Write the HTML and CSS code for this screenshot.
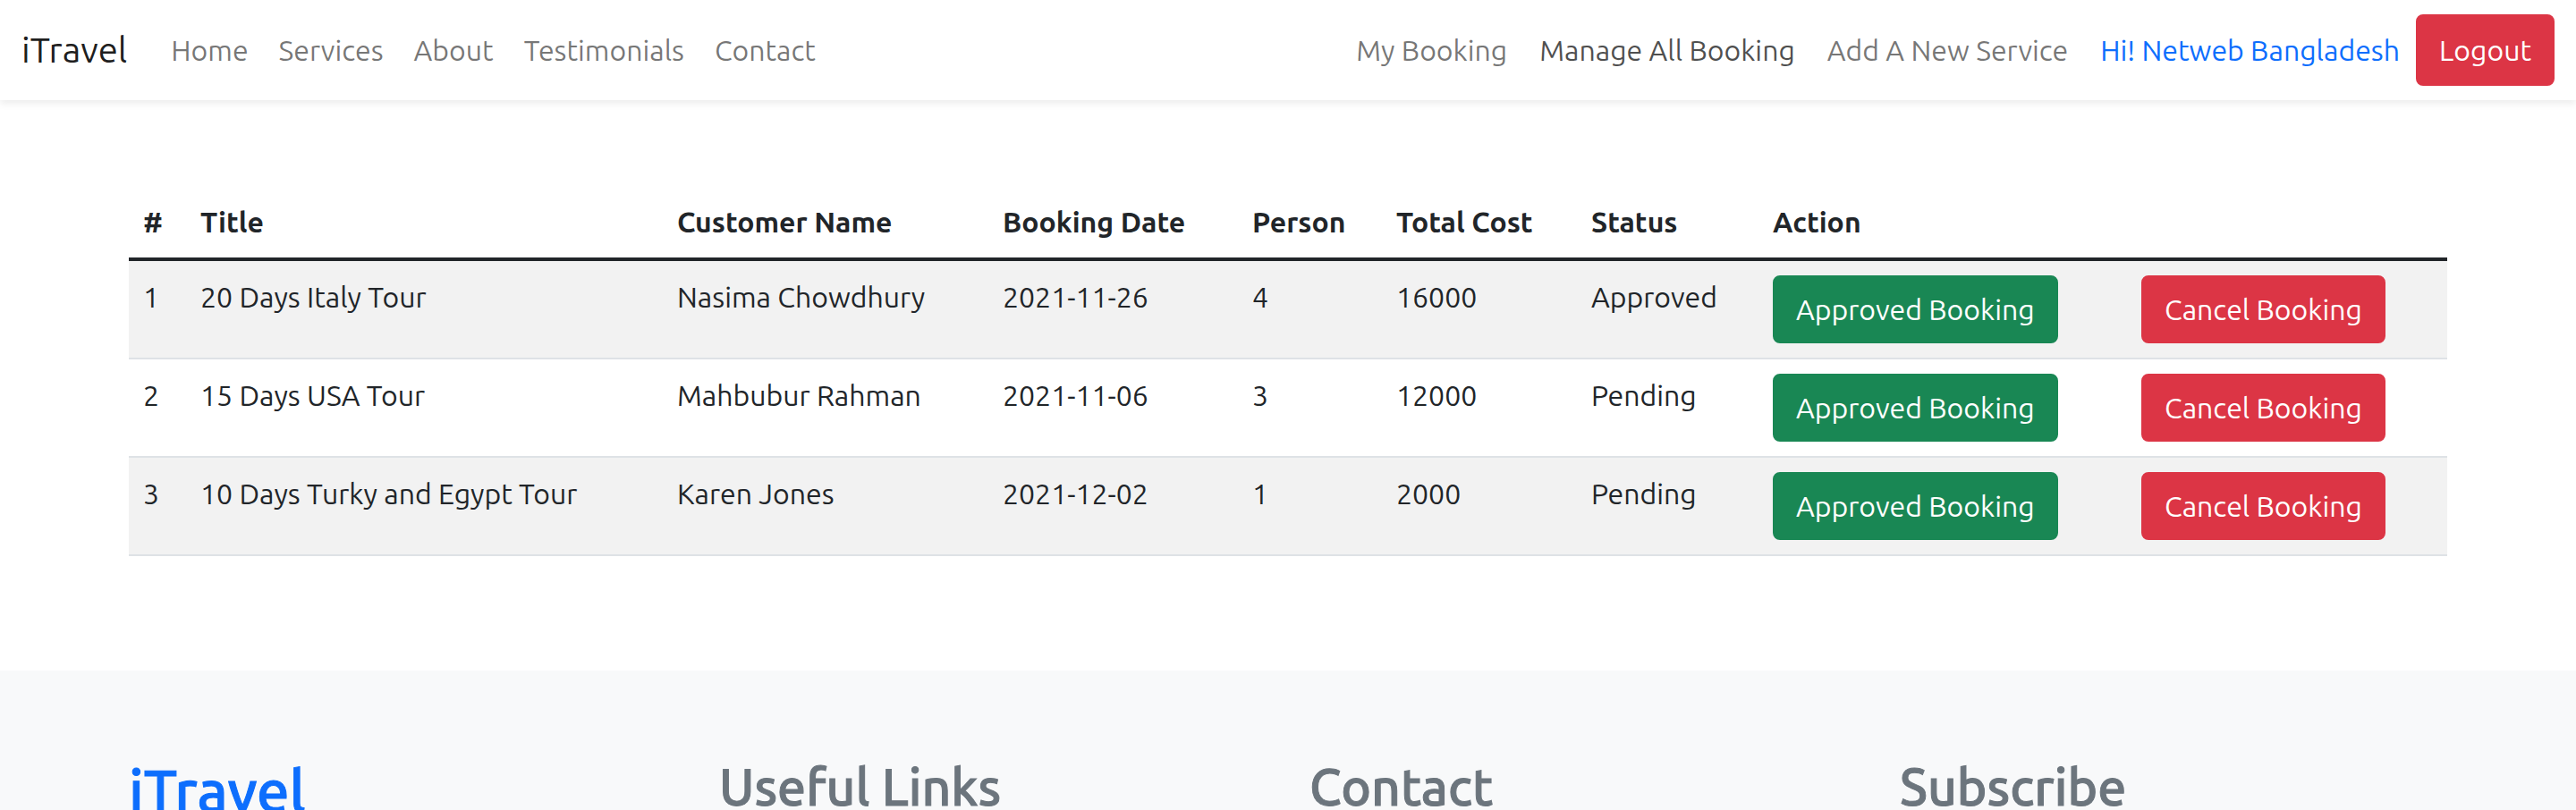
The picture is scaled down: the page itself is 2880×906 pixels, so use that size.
FILE: index.html
```html
<!DOCTYPE html>
<html lang="en">
<head>
<meta charset="utf-8">
<title>iTravel</title>
<link rel="stylesheet" href="styles.css">
</head>
<body>
<header class="navbar">
  <a class="brand" href="#">iTravel</a>
  <nav class="nav" aria-label="Main">
    <a class="nav-link" href="#">Home</a>
    <a class="nav-link" href="#">Services</a>
    <a class="nav-link" href="#">About</a>
    <a class="nav-link" href="#">Testimonials</a>
    <a class="nav-link" href="#">Contact</a>
  </nav>
  <nav class="nav nav-end" aria-label="Account">
    <a class="nav-link" href="#">My Booking</a>
    <a class="nav-link active" href="#">Manage All Booking</a>
    <a class="nav-link" href="#">Add A New Service</a>
    <a class="nav-link user" href="#">Hi! Netweb Bangladesh</a>
    <button class="btn btn-danger logout" type="button">Logout</button>
  </nav>
</header>
<main class="content">
  <table class="bookings">
    <colgroup>
      <col class="c-num"><col class="c-title"><col class="c-name"><col class="c-date"><col class="c-person"><col class="c-cost"><col class="c-status"><col class="c-approve"><col class="c-cancel">
    </colgroup>
    <thead>
      <tr><th scope="col">#</th><th scope="col">Title</th><th scope="col">Customer Name</th><th scope="col">Booking Date</th><th scope="col">Person</th><th scope="col">Total Cost</th><th scope="col">Status</th><th scope="col" colspan="2">Action</th></tr>
    </thead>
    <tbody>
      <tr><td>1</td><td>20 Days Italy Tour</td><td>Nasima Chowdhury</td><td>2021-11-26</td><td>4</td><td>16000</td><td>Approved</td><td><button class="btn btn-success" type="button">Approved Booking</button></td><td><button class="btn btn-danger" type="button">Cancel Booking</button></td></tr>
      <tr><td>2</td><td>15 Days USA Tour</td><td>Mahbubur Rahman</td><td>2021-11-06</td><td>3</td><td>12000</td><td>Pending</td><td><button class="btn btn-success" type="button">Approved Booking</button></td><td><button class="btn btn-danger" type="button">Cancel Booking</button></td></tr>
      <tr><td>3</td><td>10 Days Turky and Egypt Tour</td><td>Karen Jones</td><td>2021-12-02</td><td>1</td><td>2000</td><td>Pending</td><td><button class="btn btn-success" type="button">Approved Booking</button></td><td><button class="btn btn-danger" type="button">Cancel Booking</button></td></tr>
    </tbody>
  </table>
</main>
<footer class="footer">
  <h2 class="footer-brand">iTravel</h2>
  <h3 class="footer-title">Useful Links</h3>
  <h3 class="footer-title">Contact</h3>
  <h3 class="footer-title">Subscribe</h3>
</footer>
</body>
</html>
```
FILE: styles.css
```css
* {
  box-sizing: border-box;
}

body {
  margin: 0;
  height: 100vh;
  overflow: hidden;
  background: #fff;
  color: #212529;
  font: 400 32px/48px Ubuntu, "Noto Sans", sans-serif;
}

.navbar {
  display: flex;
  align-items: center;
  padding: 16px 24px;
  box-shadow: 0 4px 8px rgba(0, 0, 0, .075);
}

.brand {
  margin-right: 32px;
  color: rgba(0, 0, 0, .9);
  font-size: 40px;
  text-decoration: none;
}

.nav {
  display: flex;
  align-items: center;
}

.nav-end {
  margin-left: auto;
}

.nav-link {
  padding: 16px 17px;
  color: rgba(0, 0, 0, .55);
  text-decoration: none;
  white-space: nowrap;
}

.nav-end .nav-link {
  padding: 16px 18px;
}

.nav-link.active {
  color: rgba(0, 0, 0, .7);
}

.nav-link.user {
  color: #0d6efd;
}

.btn {
  padding: 12px 24px;
  border: 2px solid transparent;
  border-radius: 8px;
  color: #fff;
  font: inherit;
  white-space: nowrap;
  vertical-align: top;
}

.btn-danger {
  background: #dc3545;
  border-color: #dc3545;
}

.btn-success {
  background: #198754;
  border-color: #198754;
}

.logout {
  padding: 14px 24px;
}

.content {
  padding: 96px 144px 128px;
}

.bookings {
  width: 100%;
  table-layout: fixed;
  border-spacing: 0;
}

.bookings th,
.bookings td {
  padding: 16px;
  text-align: left;
  vertical-align: top;
  white-space: nowrap;
}

.bookings th {
  border-bottom: 4px solid #212529;
}

.bookings td {
  border-bottom: 2px solid #dee2e6;
}

.bookings tbody tr:nth-child(odd) {
  background: #f2f2f2;
}

.c-num { width: 64px; }
.c-title { width: 533px; }
.c-name { width: 364px; }
.c-date { width: 279px; }
.c-person { width: 161px; }
.c-cost { width: 218px; }
.c-status { width: 203px; }
.c-approve { width: 412px; }
.c-cancel { width: 358px; }

.footer {
  display: grid;
  grid-template-columns: repeat(4, 1fr);
  column-gap: 48px;
  padding: 96px 144px;
  background: #f8f9fa;
  color: #6c757d;
}

.footer-brand,
.footer-title {
  margin: 0;
  font-weight: 500;
  -webkit-text-stroke: 1px currentColor;
}

.footer-brand {
  color: #0d6efd;
  font-size: 65px;
  line-height: 76px;
}

.footer-title {
  font-size: 57px;
  line-height: 68px;
}
```
